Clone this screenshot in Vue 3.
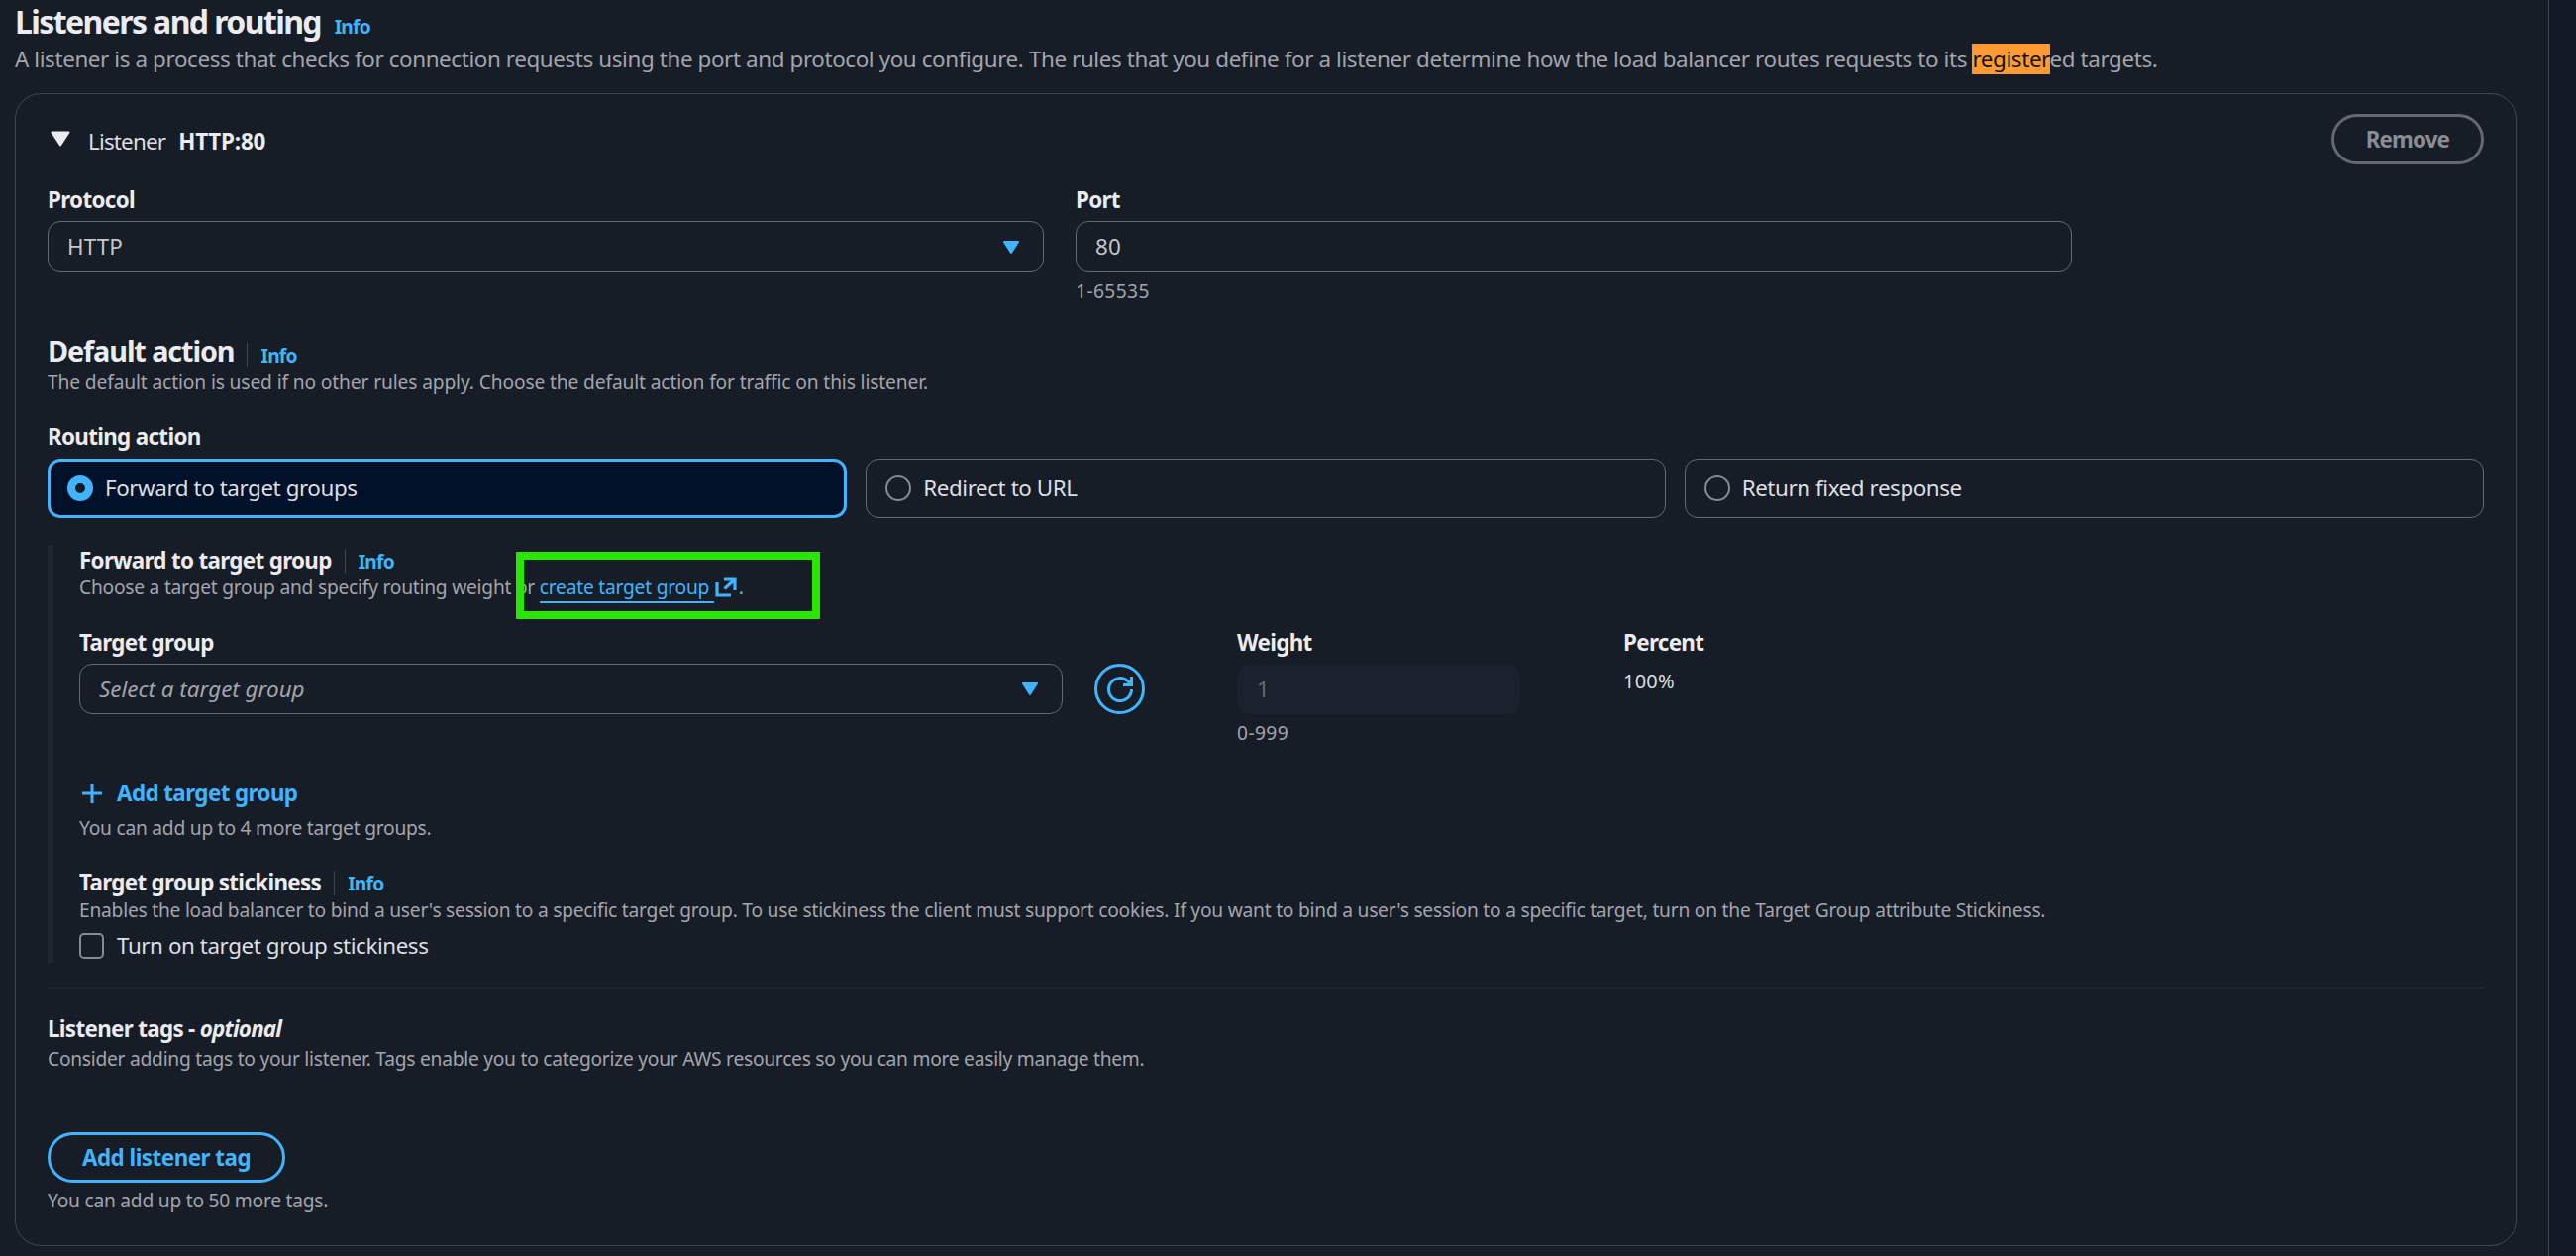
<template>
  <div class="page">
    <main class="panel">
      <header class="panel-header">
        <h2>Listeners and routing <a class="info plain">Info</a></h2>
        <p>A listener is a process that checks for connection requests using the port and protocol you configure. The rules that you define for a listener determine how the load balancer routes requests to its <mark>register</mark>ed targets.</p>
      </header>

      <section class="card">
        <div class="listener-head">
          <svg class="caret-lg" viewBox="0 0 20 16"><path d="M1.5 1.5h17L10 14.5z" /></svg>
          <span class="listener-name">Listener</span>
          <b>HTTP:80</b>
          <button class="btn disabled">Remove</button>
        </div>

        <div class="form-row">
          <div class="field">
            <label>Protocol</label>
            <div class="control">
              <span>HTTP</span>
              <svg class="caret" viewBox="0 0 16 13"><path d="M1 1h14L8 12z" /></svg>
            </div>
          </div>
          <div class="field">
            <label>Port</label>
            <div class="control">{{ port }}</div>
            <p class="hint range-hint">1-65535</p>
          </div>
        </div>

        <div class="title-row action-title">
          <h3>Default action</h3>
          <a class="info">Info</a>
        </div>
        <p class="hint action-hint">The default action is used if no other rules apply. Choose the default action for traffic on this listener.</p>

        <label class="routing-label">Routing action</label>
        <div class="tiles">
          <div
            v-for="action in actions"
            :key="action"
            :class="['tile', { selected: action === selected }]"
            @click="selected = action"
          >
            <span class="radio"></span>
            <span>{{ action }}</span>
          </div>
        </div>

        <div class="nested">
          <div class="title-row forward-title">
            <label>Forward to target group</label>
            <a class="info">Info</a>
          </div>
          <p class="hint forward-hint">Choose a target group and specify routing weight <span class="or">or<span class="highlight"></span></span> <a class="link">create target group&nbsp;</a><svg class="external" viewBox="0 0 22 20"><path d="M2 5v13h14M9 2h11v11M20 2L9.500 11.500" /></svg>.</p>

          <div class="group-row">
            <div class="field group-field">
              <label>Target group</label>
              <div class="control">
                <i>Select a target group</i>
                <svg class="caret" viewBox="0 0 16 13"><path d="M1 1h14L8 12z" /></svg>
              </div>
            </div>
            <button class="refresh" aria-label="Refresh">
              <svg viewBox="0 0 26 26"><path d="M24.500 13a11.500 11.500 0 1 1-3.400-8.100L24 8M24.500 0v8.500H16" /></svg>
            </button>
            <div class="field weight-field">
              <label>Weight</label>
              <div class="control readonly">1</div>
              <p class="hint range-hint">0-999</p>
            </div>
            <div class="field">
              <label>Percent</label>
              <p class="percent">100%</p>
            </div>
          </div>

          <a class="add-group">
            <svg viewBox="0 0 20 20"><path d="M10 0v20M0 10h20" /></svg>
            Add target group
          </a>
          <p class="hint add-hint">You can add up to 4 more target groups.</p>

          <div class="title-row sticky-title">
            <label>Target group stickiness</label>
            <a class="info">Info</a>
          </div>
          <p class="hint sticky-hint">Enables the load balancer to bind a user's session to a specific target group. To use stickiness the client must support cookies. If you want to bind a user's session to a specific target, turn on the Target Group attribute Stickiness.</p>
          <div class="check-row">
            <span class="checkbox"></span>
            <span>Turn on target group stickiness</span>
          </div>
        </div>

        <div class="tags">
          <label>Listener tags - <em>optional</em></label>
          <p class="hint tags-hint">Consider adding tags to your listener. Tags enable you to categorize your AWS resources so you can more easily manage them.</p>
          <button class="btn">Add listener tag</button>
          <p class="hint limit-hint">You can add up to 50 more tags.</p>
        </div>
      </section>
    </main>
  </div>
</template>

<script setup>
import { ref } from 'vue'

const port = ref(80)
const actions = ['Forward to target groups', 'Redirect to URL', 'Return fixed response']
const selected = ref(actions[0])
</script>

<style>
body {
  margin: 0;
  background: #131925;
}
</style>

<style scoped>
* {
  box-sizing: border-box;
}

.page {
  height: 1268px;
  overflow: hidden;
  background: #131925;
  color: #dedee3;
  font-family: 'Noto Sans', sans-serif;
  font-size: 22.4px;
  line-height: 32px;
  letter-spacing: -0.43px;
}

.panel {
  width: 2574px;
  height: 100%;
  padding: 0 32px 0 15px;
  background: #161d26;
  border-right: 1px solid #424650;
}

h2, h3, p {
  margin: 0;
}

.panel-header {
  height: 94px;
}

h2 {
  font-size: 32px;
  line-height: 43px;
  letter-spacing: -1.6px;
  color: #ebebf0;
}

.panel-header p {
  margin-top: 1px;
  color: #a4a4ad;
  letter-spacing: -0.39px;
  white-space: nowrap;
}

mark {
  background: #ff9933;
  color: #0f141a;
}

.card {
  height: 1164px;
  padding: 20px 32px 0;
  border: 1px solid #424650;
  border-radius: 26px;
}

label, b {
  font-weight: 700;
  color: #ebebf0;
}

label {
  display: block;
  letter-spacing: -0.68px;
}

.field label {
  padding-top: 1px;
}

.listener-head {
  display: flex;
  align-items: center;
  height: 51px;
}

.caret-lg {
  width: 20px;
  height: 16px;
  margin: -1px 0 0 3px;
  fill: #ebebf0;
  stroke: #ebebf0;
  stroke-width: 2;
  stroke-linejoin: round;
}

.listener-name {
  margin: 5px 13px 0 18px;
  letter-spacing: -0.8px;
}

.listener-head b {
  margin-top: 5px;
  letter-spacing: -0.2px;
}

.btn {
  display: block;
  height: 51px;
  padding: 0 32px;
  background: none;
  border: 3px solid #42b4ff;
  border-radius: 26px;
  font: 700 22.4px 'Noto Sans', sans-serif;
  letter-spacing: -0.52px;
  color: #42b4ff;
}

.btn.disabled {
  margin-left: auto;
  letter-spacing: -0.9px;
  color: #8c8c94;
  border-color: #656871;
}

.form-row {
  display: flex;
  gap: 32px;
  height: 162px;
  padding-top: 19px;
}

.form-row .field {
  width: 1006px;
}

.control {
  display: flex;
  align-items: center;
  justify-content: space-between;
  height: 52px;
  margin-top: 5px;
  padding: 0 24px 0 19px;
  border: 1px solid #656871;
  border-radius: 13px;
  letter-spacing: 0.1px;
  color: #c6c6cd;
}

.control i {
  color: #a4a4ad;
  letter-spacing: 0;
}

.caret {
  width: 16px;
  height: 13px;
  fill: #42b4ff;
  stroke: #42b4ff;
  stroke-width: 2;
  stroke-linejoin: round;
}

.hint {
  font-size: 19.2px;
  line-height: 26px;
  letter-spacing: -0.23px;
  color: #a4a4ad;
  white-space: nowrap;
}

.range-hint {
  margin-top: 6px;
  letter-spacing: 0.4px;
}

.title-row {
  display: flex;
  align-items: center;
}

.info {
  font-size: 19.2px;
  line-height: 25px;
  font-weight: 700;
  letter-spacing: -0.8px;
  color: #42b4ff;
}

.info.plain {
  margin-left: 7px;
}

.title-row .info {
  margin-left: 13px;
  padding-left: 13px;
  border-left: 1px solid #424650;
}

.action-title {
  height: 40px;
  margin-top: 6px;
}

h3 {
  font-size: 28.8px;
  line-height: 36px;
  letter-spacing: -1.1px;
  color: #ebebf0;
}

.action-title .info {
  margin-top: 8px;
}

.action-hint {
  margin-top: -1px;
  letter-spacing: -0.13px;
}

.routing-label {
  margin-top: 26px;
}

.tiles {
  display: grid;
  grid-template-columns: repeat(3, 1fr);
  gap: 19px;
  margin-top: 6px;
}

.tile {
  display: flex;
  align-items: center;
  gap: 12px;
  height: 60px;
  padding: 0 19px;
  border: 1px solid #656871;
  border-radius: 13px;
}

.tile.selected {
  padding: 0 17px;
  background: #001129;
  border: 3px solid #42b4ff;
}

.radio {
  width: 26px;
  height: 26px;
  border: 2px solid #838b98;
  border-radius: 50%;
}

.selected .radio {
  background: #161d26;
  border: 8px solid #42b4ff;
}

.nested {
  height: 422px;
  margin-top: 27px;
  padding-left: 26px;
  border-left: 6px solid #202733;
}

.forward-hint {
  height: 26px;
  margin-top: -2px;
}

.or {
  position: relative;
}

/* annotation frame drawn over the create link */
.highlight {
  position: absolute;
  left: 0;
  top: -22px;
  width: 307px;
  height: 68px;
  border: 8px solid #28e600;
}

.link {
  color: #42b4ff;
  padding-bottom: 1px;
  border-bottom: 2px solid #42b4ff;
}

.external {
  width: 22px;
  height: 20px;
  margin: 0 2px 0 1px;
  vertical-align: -3px;
  fill: none;
  stroke: #42b4ff;
  stroke-width: 3.2;
}

.group-row {
  display: flex;
  height: 144px;
  margin-top: 26px;
}

.group-field {
  width: 993px;
}

.group-row .control {
  height: 51px;
}

.refresh {
  display: flex;
  align-items: center;
  justify-content: center;
  width: 51px;
  height: 51px;
  margin: 38px 93px 0 32px;
  padding: 0;
  background: none;
  border: 3px solid #42b4ff;
  border-radius: 50%;
}

.refresh svg {
  width: 26px;
  height: 26px;
  fill: none;
  stroke: #42b4ff;
  stroke-width: 3;
}

.weight-field {
  width: 286px;
  margin-right: 104px;
}

.group-row .readonly {
  background: #1b222e;
  border-color: #1b222e;
  color: #656871;
}

.percent {
  margin-top: 7px;
  font-size: 20px;
  letter-spacing: 0.2px;
}

.add-group {
  display: flex;
  align-items: center;
  gap: 15px;
  margin-top: 9px;
  padding-left: 3px;
  font-weight: 700;
  letter-spacing: -0.6px;
  color: #42b4ff;
}

.add-group svg {
  width: 20px;
  height: 20px;
  stroke: #42b4ff;
  stroke-width: 3;
}

.add-hint {
  margin-top: 6px;
}

.sticky-title {
  margin-top: 26px;
}

.sticky-hint {
  margin-top: -1px;
}

.check-row {
  display: flex;
  align-items: center;
  gap: 13px;
  margin-top: 7px;
}

.checkbox {
  width: 25px;
  height: 26px;
  border: 2px solid #838b98;
  border-radius: 5px;
}

.tags {
  margin-top: 24px;
  padding-top: 25px;
  border-top: 2px solid #1c2430;
}

em {
  letter-spacing: -0.8px;
}

.tags-hint {
  margin-top: 1px;
  letter-spacing: -0.25px;
}

.tags .btn {
  margin-top: 61px;
}

.limit-hint {
  margin-top: 5px;
}
</style>
